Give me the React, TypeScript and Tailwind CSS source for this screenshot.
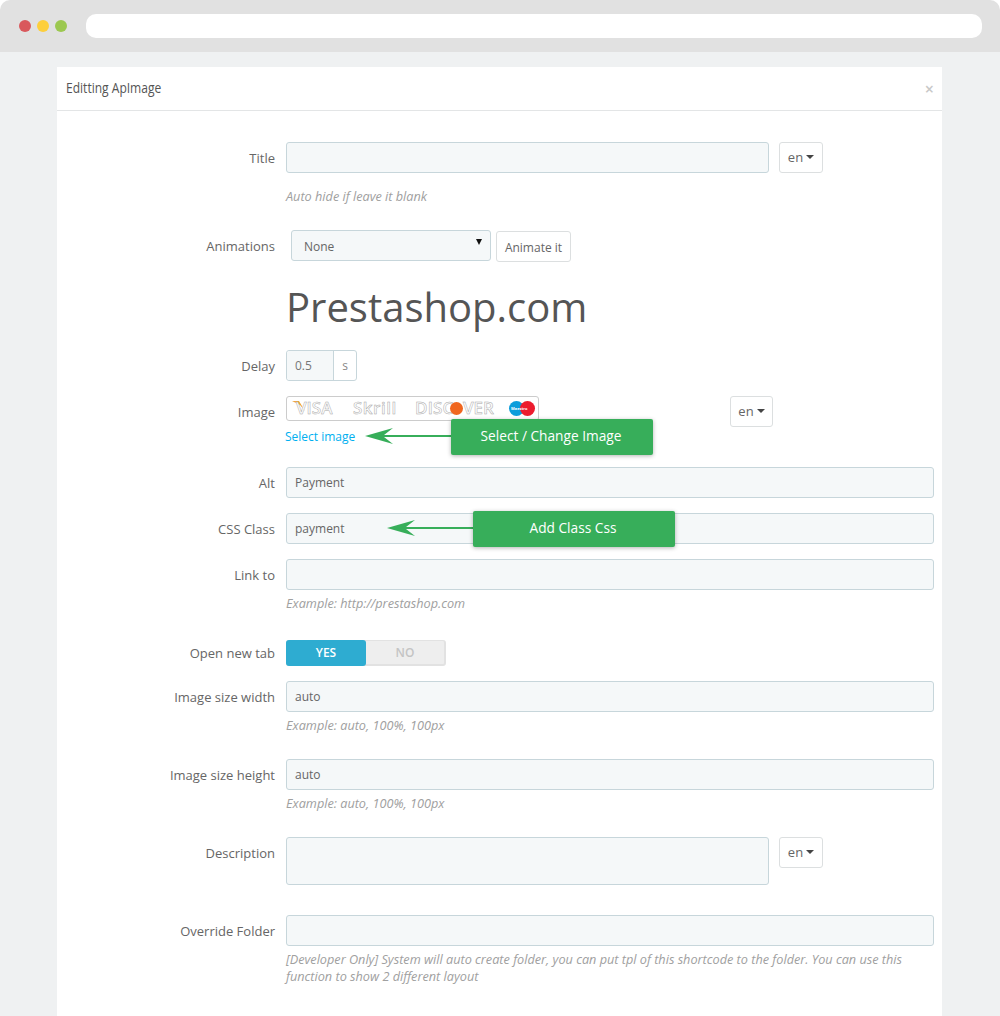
const inputCls =
  'h-[31px] border border-[#c7d6db] rounded-[3px] bg-[#f5f8f9] px-2 flex items-center text-[12px] text-[#666] shrink-0';

function Label({ children, top = 'pt-[7px]' }: { children: string; top?: string }) {
  return <div className={`w-[218px] shrink-0 text-right text-[13px] leading-[18px] text-[#666] ${top}`}>{children}</div>;
}

function Help({ children }: { children: React.ReactNode }) {
  return <p className="pl-[229px] pr-[8px] text-[12.7px] leading-[17px] italic text-[#a0a0a0]">{children}</p>;
}

function LangButton({ className = '' }: { className?: string }) {
  return (
    <div className={`h-[31px] border border-[#dcdfe0] rounded-[3px] bg-white flex items-center justify-center gap-[3px] text-[13px] text-[#666] ${className}`}>
      en
      <span className="w-0 h-0 mt-[-2px] border-x-[4px] border-x-transparent border-t-[4px] border-t-[#444]" />
    </div>
  );
}

function Note({ children, className }: { children: string; className: string }) {
  return (
    <div className={`absolute h-[36px] pb-[2px] pr-[2px] bg-[#37ae5a] rounded-[2px] shadow-[0_1px_4px_rgba(0,0,0,0.3)] flex items-center justify-center text-[13.7px] text-white ${className}`}>
      {children}
    </div>
  );
}

function Arrow({ className }: { className: string }) {
  return (
    <svg className={`absolute ${className}`} width="88" height="20" viewBox="0 0 88 20">
      <path d="M0 10 L28 2 L19 9 L88 9 L88 11 L19 11 L28 18 Z" fill="#37ae5a" />
    </svg>
  );
}

function CardLogos() {
  const outline = 'absolute top-[1px] text-[17px] leading-[20px] font-semibold text-white [-webkit-text-stroke:0.5px_#a8a8a8]';
  return (
    <div className="relative w-[253px] h-[25px] border border-[#ccc] rounded-[3px] bg-white overflow-hidden shrink-0">
      <svg className="absolute left-[5px] top-[3px]" width="14" height="12" viewBox="0 0 14 12">
        <path d="M0 1 L7 1 L13 11 L8 5 Z" fill="#f0a63c" />
      </svg>
      <span className={`${outline} left-[9px]`}>VISA</span>
      <span className={`${outline} left-[66px] tracking-[0.5px]`}>Skrill</span>
      <span className={`${outline} left-[128px] tracking-[0.2px]`}>DISC</span>
      <span className="absolute left-[163px] top-[5px] w-[13px] h-[13px] rounded-full bg-[#f0661f]" />
      <span className={`${outline} left-[176px]`}>VER</span>
      <span className="absolute left-[222px] top-[4px] w-[15px] h-[15px] rounded-full bg-[#0c9ddb]" />
      <span className="absolute left-[233px] top-[4px] w-[15px] h-[15px] rounded-full bg-[#ec1c2e]" />
      <span className="absolute left-[224px] top-[9px] text-[4px] leading-[5px] font-bold text-white">Maestro</span>
    </div>
  );
}

export default function App() {
  return (
    <div className="w-[1000px] h-[1016px] overflow-hidden bg-white font-['Open_Sans','Liberation_Sans',sans-serif]">
      <div className="h-[52px] bg-[#e1e1e1] rounded-t-[10px] flex items-center pl-[19px] pr-[18px]">
        <div className="flex gap-[6px]">
          <span className="w-3 h-3 rounded-full bg-[#d9585c]" />
          <span className="w-3 h-3 rounded-full bg-[#fdcf3c]" />
          <span className="w-3 h-3 rounded-full bg-[#9cc850]" />
        </div>
        <div className="ml-[19px] flex-1 h-[24px] rounded-[10px] bg-white" />
      </div>

      <div className="h-[964px] bg-[#eff1f2] pt-[15px] px-[57px]">
        <div className="relative h-[949px] w-[885px] bg-white">
          <div className="h-[44px] border-b border-[#e3e5e6] flex items-center justify-between pl-[9px] pr-[8px]">
            <span className="inline-block mb-[3px] origin-left scale-x-[0.86] font-['Open_Sans','Liberation_Sans',sans-serif] text-[14px] font-medium text-[#555]">Editting ApImage</span>
            <span className="text-[16px] leading-none font-semibold text-[#c8c8c8]">×</span>
          </div>

          <div className="pt-[31px]">
            <div className="flex">
              <Label>Title</Label>
              <div className="ml-[11px] w-[483px]"><div className={inputCls} /></div>
              <LangButton className="ml-[10px] w-[44px]" />
            </div>
            <div className="mt-[15px]"><Help>Auto hide if leave it blank</Help></div>

            <div className="flex mt-[25px]">
              <Label>Animations</Label>
              <div className="ml-[16px] w-[200px] h-[31px] pt-[2px] border border-[#c7d6db] rounded-[3px] bg-[#f5f8f9] pl-[12px] pr-[8px] flex items-center justify-between text-[12px] text-[#666]">
                None
                <span className="mb-[9px] w-0 h-0 border-x-[3.5px] border-x-transparent border-t-[6px] border-t-[#111]" />
              </div>
              <div className="ml-[5px] mt-[1px] w-[75px] h-[31px] pt-[2px] border border-[#dcdfe0] rounded-[3px] bg-white flex items-center justify-center text-[12px] text-[#666]">Animate it</div>
            </div>

            <div className="pl-[229px] mt-[21px] h-[47px] text-[40px] leading-[48px] text-[#555]">Prestashop.com</div>

            <div className="flex mt-[20px]">
              <Label>Delay</Label>
              <div className="ml-[11px] flex h-[31px] w-[71px] border border-[#c7d6db] rounded-[3px] text-[12px] text-[#777]">
                <div className="w-[47px] bg-[#f5f8f9] pl-[8px] flex items-center border-r border-[#c7d6db] rounded-l-[3px]">0.5</div>
                <div className="flex-1 flex items-center justify-center text-[#888]">s</div>
              </div>
            </div>

            <div className="flex mt-[15px] h-[71px]">
              <Label>Image</Label>
              <div className="ml-[11px] w-[444px]">
                <CardLogos />
                <div className="mt-[7px] -ml-px text-[12px] leading-[17px] text-[#00aff0]">Select image</div>
              </div>
              <LangButton className="w-[43px]" />
            </div>

            <div className="flex">
              <Label>Alt</Label>
              <div className="ml-[11px] w-[648px]"><div className={inputCls}>Payment</div></div>
            </div>
            <div className="flex mt-[15px]">
              <Label>CSS Class</Label>
              <div className="ml-[11px] w-[648px]"><div className={inputCls}>payment</div></div>
            </div>
            <div className="flex mt-[15px]">
              <Label>Link to</Label>
              <div className="ml-[11px] w-[648px]"><div className={inputCls} /></div>
            </div>
            <div className="mt-[5px]"><Help>Example: http://prestashop.com</Help></div>

            <div className="flex mt-[28px]">
              <Label top="pt-[4px]">Open new tab</Label>
              <div className="ml-[11px] flex w-[160px] h-[26px] rounded-[3px] bg-[#eeeeee] border border-[#e2e2e2] border-r-2 border-b-2 text-[12px] font-semibold">
                <div className="w-[80px] -ml-px -mt-px -mb-[2px] rounded-[3px] bg-[#2eacd1] text-white flex items-center justify-center">YES</div>
                <div className="flex-1 flex items-center justify-center text-[#c4c4c4]">NO</div>
              </div>
            </div>

            <div className="flex mt-[15px]">
              <Label>Image size width</Label>
              <div className="ml-[11px] w-[648px]"><div className={inputCls}>auto</div></div>
            </div>
            <div className="mt-[5px]"><Help>Example: auto, 100%, 100px</Help></div>

            <div className="flex mt-[25px]">
              <Label>Image size height</Label>
              <div className="ml-[11px] w-[648px]"><div className={inputCls}>auto</div></div>
            </div>
            <div className="mt-[5px]"><Help>Example: auto, 100%, 100px</Help></div>

            <div className="flex mt-[25px]">
              <Label>Description</Label>
              <div className="ml-[11px] w-[483px] h-[48px] border border-[#c7d6db] rounded-[3px] bg-[#f5f8f9]" />
              <LangButton className="ml-[10px] w-[44px]" />
            </div>

            <div className="flex mt-[30px]">
              <Label>Override Folder</Label>
              <div className="ml-[11px] w-[648px]"><div className={inputCls} /></div>
            </div>
            <div className="mt-[5px]">
              <Help>[Developer Only] System will auto create folder, you can put tpl of this shortcode to the folder. You can use this function to show 2 different layout</Help>
            </div>
          </div>

          <Arrow className="left-[308px] top-[359px]" />
          <Note className="left-[394px] top-[352px] w-[202px]">Select / Change Image</Note>
          <Arrow className="left-[330px] top-[451px]" />
          <Note className="left-[416px] top-[444px] w-[202px]">Add Class Css</Note>
        </div>
      </div>
    </div>
  );
}
